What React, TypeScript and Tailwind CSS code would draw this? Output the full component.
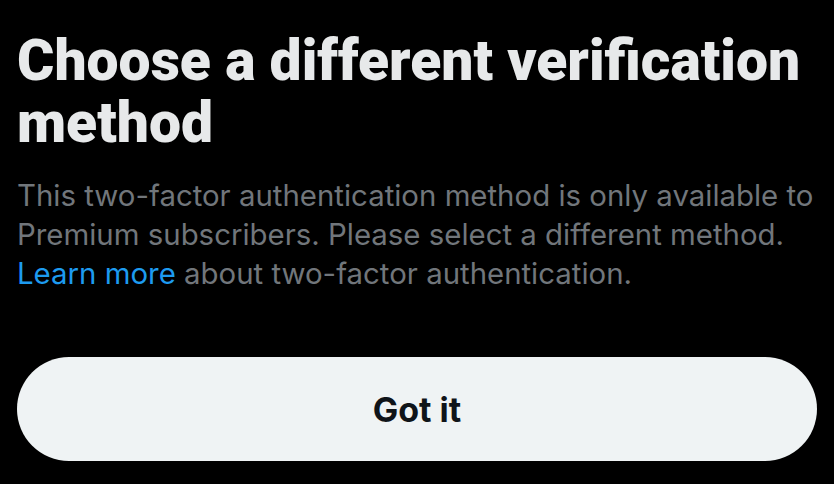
export default function App() {
  return (
    <div className="w-[834px] h-[484px] bg-black overflow-hidden flex flex-col pl-[17px] pr-[17px] pt-[30px]" style={{ fontFamily: 'Inter, "Noto Sans", sans-serif' }}>
      <h1 className="text-[#e7e9ea] text-[57px] leading-[62px] font-black" style={{ fontFamily: 'Roboto, "Noto Sans", sans-serif' }}>
        Choose a different verification method
      </h1>
      <p className="mt-[22px] -mr-[16px] whitespace-nowrap text-[#71767b] text-[29.4px] leading-[39px]">
        This two-factor authentication method is only available to
        <br />
        Premium subscribers. Please select a different method.
        <br />
        <span className="text-[#1d9bf0]">Learn more</span> about two-factor authentication.
      </p>
      <button className="mt-[64px] w-[800px] h-[104px] rounded-full bg-[#eff3f4] text-[#0f1419] text-[34px] font-bold flex items-center justify-center">
        Got it
      </button>
    </div>
  );
}
